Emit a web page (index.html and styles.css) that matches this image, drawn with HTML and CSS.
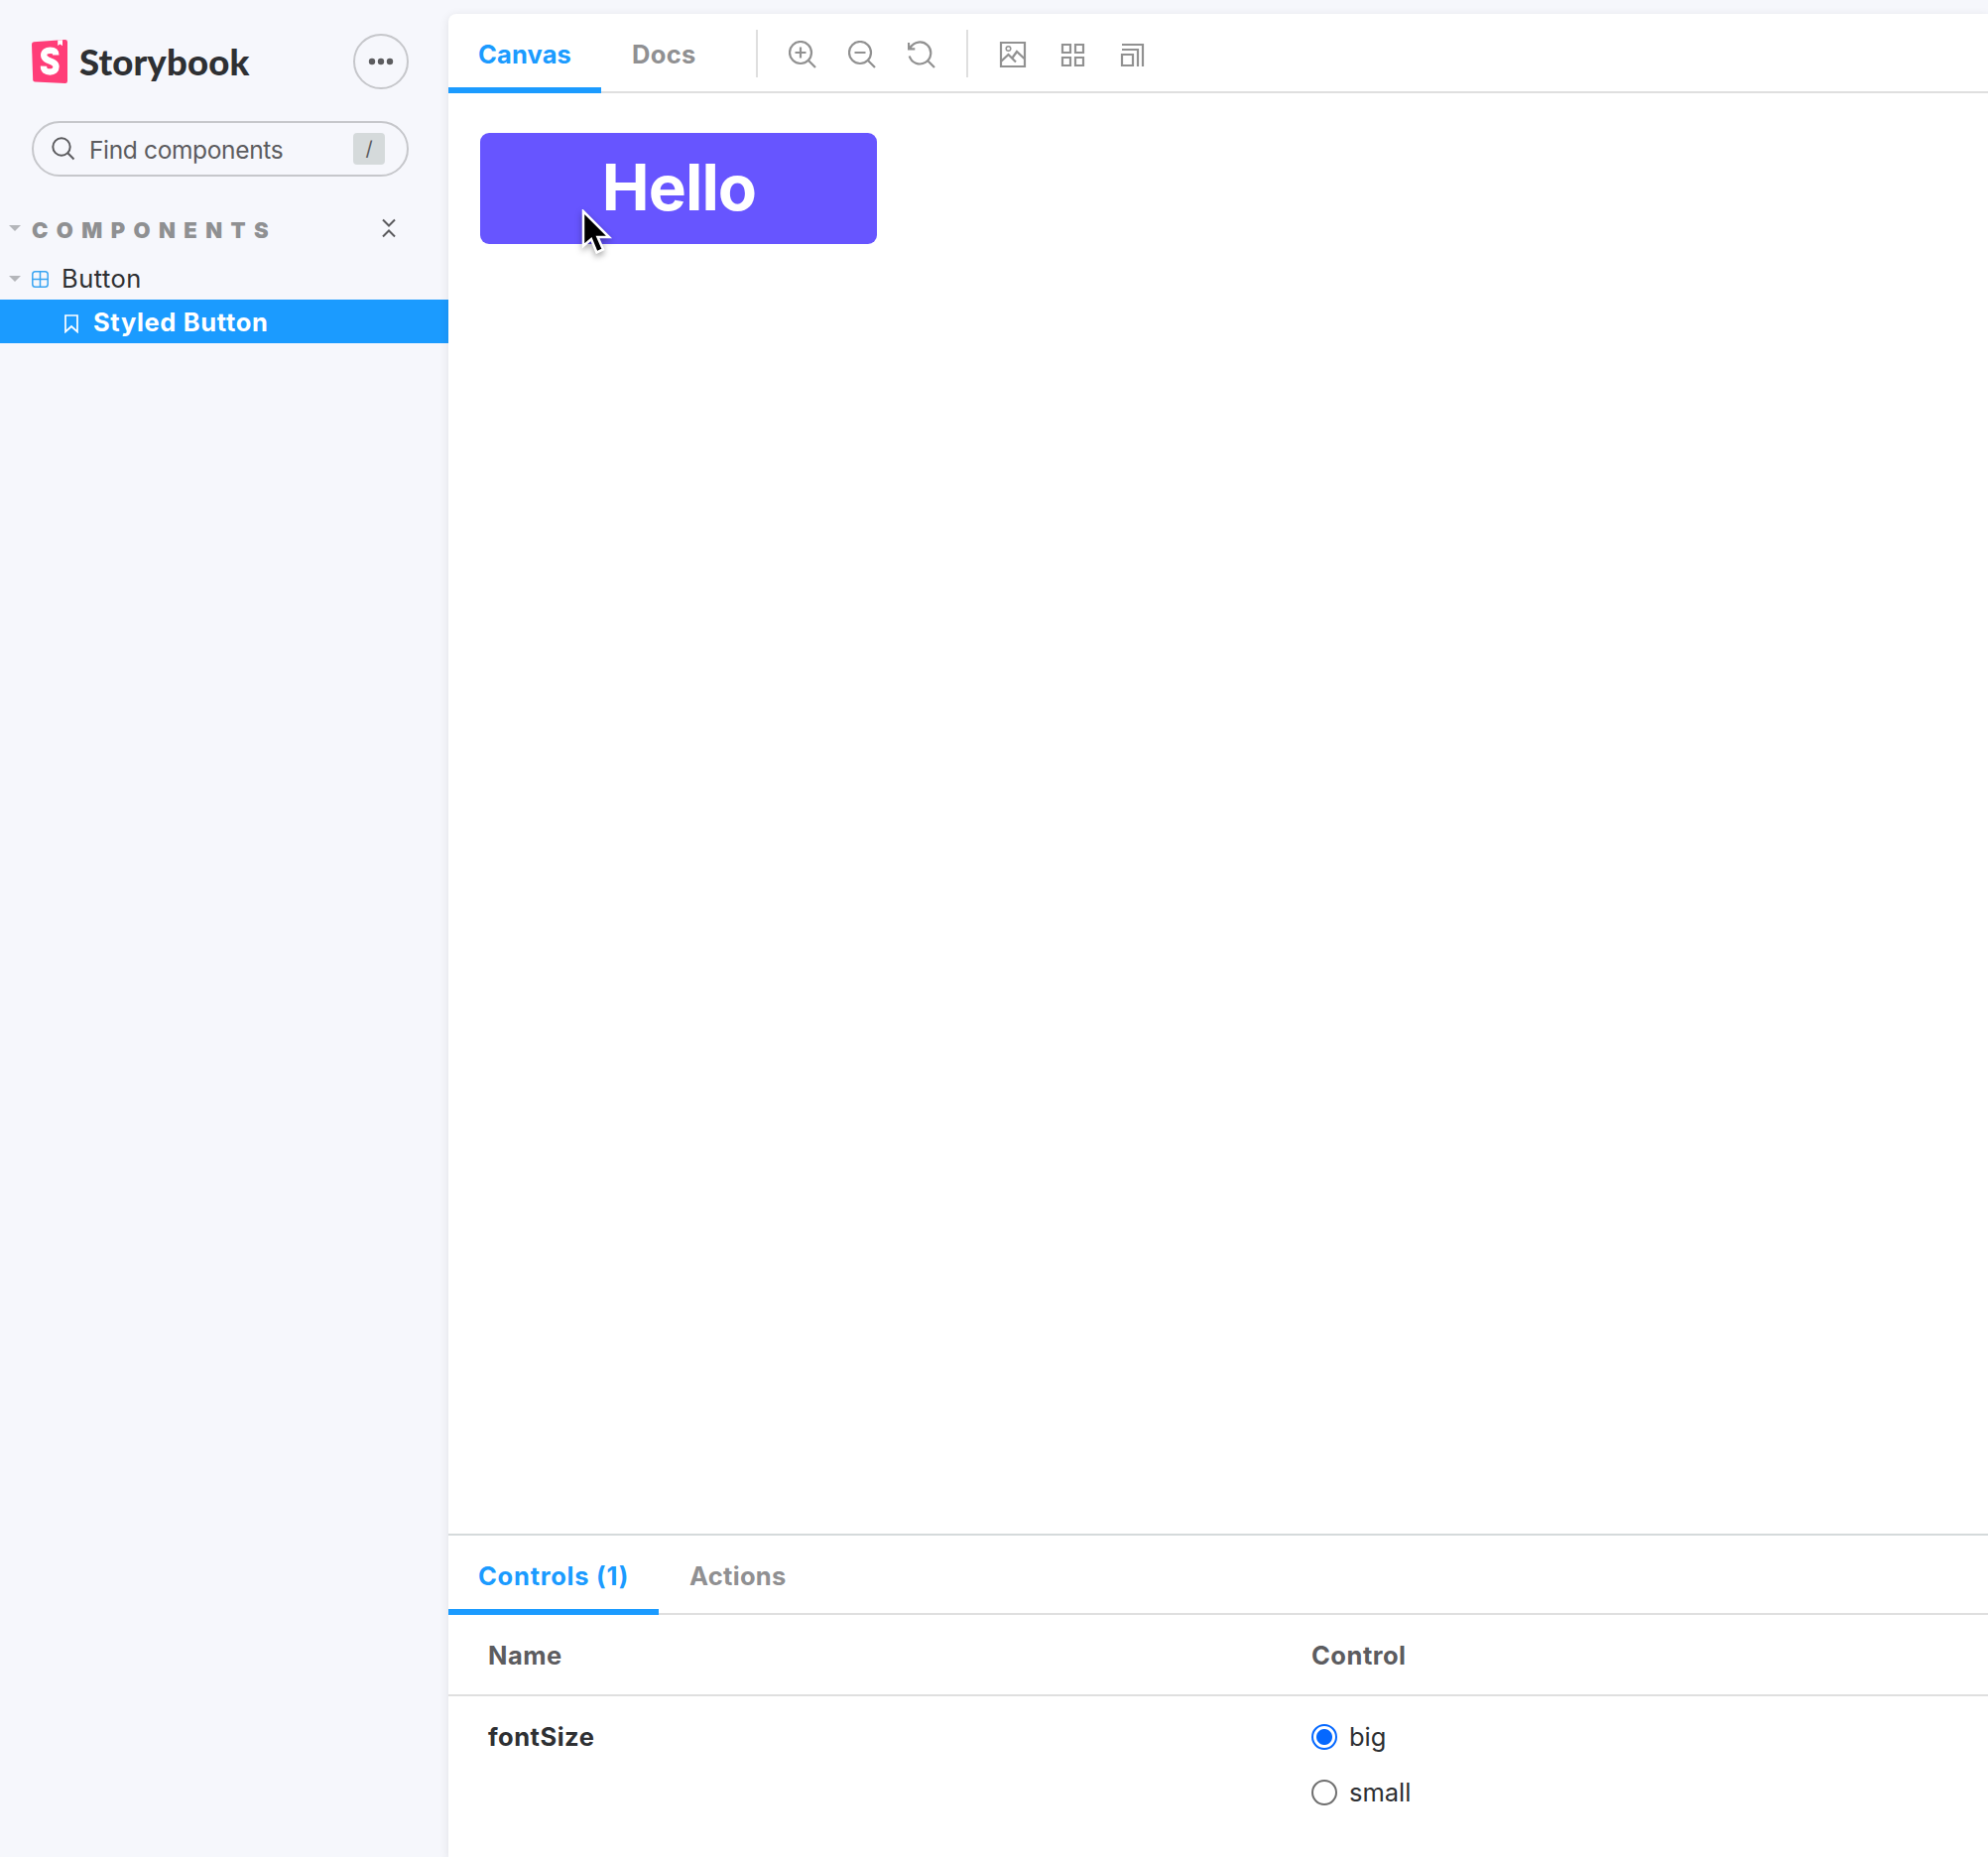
FILE: index.html
```html
<!DOCTYPE html>
<html lang="en">
<head>
<meta charset="utf-8">
<title>Button - Styled Button · Storybook</title>
<link rel="stylesheet" href="styles.css">
</head>
<body>
<div class="app">
  <aside class="sidebar">
    <header class="brand">
      <svg class="brand-mark" width="36" height="44" viewBox="0 0 36 44">
        <path d="M2 2.200 33.600 0Q36 0 36 2.200V41.800Q36 44 33.800 44L3.200 42.600Q1.300 42.500 1.200 40.500L0 4.400Q0 2.400 2 2.200Z" fill="#ff3d78"/>
        <path d="M26.200.6 31 .2V6.200L28.600 4.400 26.200 6Z" fill="#fff"/>
        <path d="M24.300 15.500C24.300 12 22.500 10.800 18.600 10.800C14.500 10.800 12.200 12.600 12.200 15.600C12.200 22.500 24.500 20.500 24.500 27.300C24.500 30.700 22.300 32.500 18.400 32.500C14 32.500 11.900 30.800 12 26.700" fill="none" stroke="#fff" stroke-width="6.400"/>
      </svg>
      <span class="brand-name">Storybook</span>
      <button class="menu-button" aria-label="Shortcuts">
        <svg width="26" height="8" viewBox="0 0 26 8" fill="#5c5c5f"><circle cx="4" cy="4" r="3.200"/><circle cx="13" cy="4" r="3.200"/><circle cx="22" cy="4" r="3.200"/></svg>
      </button>
    </header>
    <div class="search">
      <svg class="search-icon" width="24" height="24" viewBox="0 0 24 24" fill="none" stroke="#5c5c5f" stroke-width="2"><circle cx="10" cy="10" r="8.700"/><path d="m16.300 16.300 6.200 6.200"/></svg>
      <span class="search-label">Find components</span>
      <kbd class="key">/</kbd>
    </div>
    <div class="section">
      <svg class="caret" width="12" height="6"><path d="M0 0H12L6 6Z"/></svg>
      <span class="section-title">COMPONENTS</span>
      <svg class="collapse" width="14" height="20" viewBox="0 0 14 20" fill="none" stroke="#5c5c5f" stroke-width="2"><path d="m1 1.500 6 6 6-6M1 18.500l6-6 6 6"/></svg>
    </div>
    <nav class="tree">
      <a class="node">
        <svg class="caret" width="12" height="6"><path d="M0 0H12L6 6Z"/></svg>
        <svg class="node-icon" width="17" height="17" viewBox="0 0 17 17" fill="none" stroke="#3aa5f2" stroke-width="1.500"><rect x=".8" y=".8" width="15.400" height="15.400" rx="2.800"/><path d="M8.500 1V16M1 8.500H16"/></svg>
        <span class="node-label">Button</span>
      </a>
      <a class="node node-selected">
        <svg class="story-icon" width="14" height="19" viewBox="0 0 14 19" fill="none" stroke="#fff" stroke-width="1.700"><path d="M1 1H13V17.500L7 12 1 17.500Z"/></svg>
        <span class="story-label">Styled Button</span>
      </a>
    </nav>
  </aside>
  <main class="main">
    <div class="bar toolbar">
      <button class="tab tab-active">Canvas</button>
      <button class="tab tab-docs">Docs</button>
      <i class="separator"></i>
      <div class="tools">
        <svg viewBox="0 0 28 28"><circle cx="12" cy="12" r="11"/><path d="m20 20 7 7M6.500 12h11M12 6.500v11"/></svg>
        <svg viewBox="0 0 28 28"><circle cx="12" cy="12" r="11"/><path d="m20 20 7 7M6.500 12h11"/></svg>
        <svg viewBox="0 0 28 28"><path d="M1.700 15.500A11 11 0 1 0 2.700 7M20 20l7 7M1 2v6.300h6.300M1 8.300 4 5"/></svg>
      </div>
      <i class="separator"></i>
      <div class="tools">
        <svg viewBox="0 0 28 28"><path d="M2 2H26V26H2ZM2 21 9.500 14 17 21.500M13 18 18 11 26 18.500"/><circle cx="9.500" cy="8" r="2.300" stroke-width="1.500"/></svg>
        <svg viewBox="0 0 28 28"><path d="M4 4h8v8H4ZM17 4h8v8h-8ZM4 17h8v8H4ZM17 17h8v8h-8Z"/></svg>
        <svg viewBox="0 0 28 28"><path d="M4 14h11v11H4ZM4 9H20V26M4 4H25V26"/></svg>
      </div>
    </div>
    <section class="canvas">
      <button class="hello">Hello</button>
      <svg class="cursor" width="36" height="52" viewBox="0 0 36 52"><path d="M2 2V37L10 30 15.500 43.500 22 40.500 16.500 28H28Z" fill="#000" stroke="#fff" stroke-width="2.500"/></svg>
    </section>
    <section class="panel">
      <div class="bar">
        <button class="tab tab-active tab-count">Controls (1)</button>
        <button class="tab tab-actions">Actions</button>
      </div>
      <div class="row row-head"><span>Name</span><span>Control</span></div>
      <div class="row row-body">
        <span class="arg">fontSize</span>
        <div class="options">
          <label class="option"><i class="radio radio-on"></i><span>big</span></label>
          <label class="option"><i class="radio"></i><span>small</span></label>
        </div>
      </div>
    </section>
  </main>
</div>
</body>
</html>
```
FILE: styles.css
```css
* { box-sizing: border-box; }
body {
  margin: 0;
  background: #f6f7fc;
  color: #2e3033;
  font-family: Inter, "Liberation Sans", sans-serif;
  font-size: 25.5px;
  line-height: 32px;
}
button { border: 0; padding: 0; background: none; font: inherit; letter-spacing: inherit; color: inherit; }
svg { display: block; flex: none; }
.app { display: flex; height: 1872px; overflow: hidden; }
.sidebar { width: 452px; flex: none; padding-top: 34px; }
.brand { display: flex; align-items: center; height: 56px; padding: 0 40px 0 32px; }
.brand-name { margin-left: 12px; padding-bottom: 1px; font: 900 36.500px/44px Lato, sans-serif; letter-spacing: .15px; }
.menu-button {
  display: flex; align-items: center; justify-content: center;
  width: 56px; height: 56px; margin-left: auto;
  border: 2px solid #c6c7cb; border-radius: 50%;
}
.search {
  display: flex; align-items: center;
  height: 56px; margin: 32px 40px 0 32px; padding: 0 22px 0 18px;
  border: 2px solid #c6c7cb; border-radius: 28px; color: #5c5c5f;
}
.search-label { margin-left: 14px; padding-top: 2px; font-size: 24.500px; letter-spacing: -.35px; }
.key {
  width: 32px; height: 32px; margin-left: auto; border-radius: 4px;
  background: #d5dadb; font: 20px/32px Inter, sans-serif; text-align: center;
}
.section { display: flex; align-items: center; height: 44px; margin-top: 32px; padding: 0 53px 0 9px; }
.caret { fill: #b4b6ba; }
.section .caret, .collapse { margin-bottom: 4px; }
.section-title { margin-left: 11px; color: #8f9092; font-size: 22px; font-weight: 900; letter-spacing: 8.400px; }
.collapse { margin-left: auto; }
.tree { padding-top: 4px; }
.node { display: flex; align-items: center; height: 44px; padding: 2px 0 0 9px; }
.node-icon { margin-left: 11px; }
.node-label { margin-left: 13px; letter-spacing: .5px; }
.node-selected { padding-left: 65px; background: #1b9bff; color: #fff; font-weight: 700; }
.story-icon { margin-top: 2px; }
.story-label { margin-left: 15px; letter-spacing: .65px; }
.main {
  display: flex; flex-direction: column; flex: 1; margin-top: 14px;
  background: #fff; border-top-left-radius: 8px; box-shadow: 0 2px 10px rgba(0, 0, 0, .1);
}
.bar { display: flex; height: 80px; flex: none; box-shadow: inset 0 -2px #dfdfdf; color: #909092; font-weight: 700; }
.tab { padding: 2px 30px 0; border-bottom: 6px solid transparent; border-top: 6px solid transparent; letter-spacing: .13px; }
.tab-active { border-bottom-color: #1b9bff; color: #1b9bff; }
.tab-docs { padding-left: 31px; letter-spacing: .35px; }
.tab-count { letter-spacing: .75px; }
.tab-actions { padding-left: 31px; letter-spacing: .3px; }
.separator { width: 2px; height: 48px; margin-top: 16px; background: #dfdfdf; }
.toolbar .separator:first-of-type { margin-left: 30px; }
.tools { display: flex; gap: 32px; padding: 27px 31px 0; }
.tools svg { width: 28px; height: 28px; fill: none; stroke: #919191; stroke-width: 2.200; }
.canvas { position: relative; flex: 1; padding: 40px 32px; }
.hello { width: 400px; height: 112px; padding: 0 0 2px 1px; border-radius: 9px; background: #6755ff; color: #fff; font-size: 64px; font-weight: 700; letter-spacing: -.9px; }
.cursor { position: absolute; left: 134px; top: 117px; filter: drop-shadow(0 3px 3px rgba(0, 0, 0, .35)); }
.panel { height: 326px; flex: none; border-top: 2px solid #d5dadb; }
.row { display: grid; grid-template-columns: 830px 1fr; padding-left: 40px; }
.row-head { height: 82px; padding-top: 2px; align-items: center; border-bottom: 2px solid #dfdfdf; color: #5c5c5f; font-weight: 700; letter-spacing: .5px; }
.row-body { padding-top: 25px; }
.arg { font-weight: 700; letter-spacing: .5px; }
.options { display: grid; gap: 24px; }
.option { display: flex; align-items: center; gap: 12px; }
.radio { width: 26px; height: 26px; border: 2px solid #6f6f6f; border-radius: 50%; }
.radio-on { border-color: #0568ff; background: radial-gradient(circle, #0568ff 7.500px, transparent 8.500px); }
```
